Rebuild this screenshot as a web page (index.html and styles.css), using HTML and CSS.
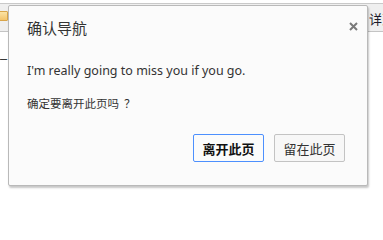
FILE: index.html
```html
<!DOCTYPE html>
<html lang="zh">
<head>
<meta charset="utf-8">
<link rel="stylesheet" href="styles.css">
</head>
<body>
<div class="page">
  <div class="toolbar">
    <div class="folder"></div>
    <div class="spacer"></div>
    <div class="tool-text">详到</div>
  </div>
  <div class="content">_ t</div>

  <div class="dialog">
    <div class="dialog-head">
      <div class="title">确认导航</div>
      <div class="close">
        <svg width="9" height="9" viewBox="0 0 9 9"><path d="M1 1 L8 8 M8 1 L1 8" stroke="#7a7a7a" stroke-width="2"/></svg>
      </div>
    </div>
    <div class="message">I'm really going to miss you if you go.</div>
    <div class="question">确定要离开此页吗<span class="fw">？</span></div>
    <div class="actions">
      <button class="btn btn-primary">离开此页</button>
      <button class="btn">留在此页</button>
    </div>
  </div>
</div>
</body>
</html>
```

FILE: styles.css
```css
html, body {
  margin: 0;
  padding: 0;
  background: #ffffff;
}
.page {
  position: relative;
  width: 383px;
  height: 201px;
  overflow: hidden;
  font-family: "Noto Sans", "Noto Sans CJK SC", sans-serif;
}
.toolbar {
  margin-top: 3px;
  height: 27px;
  border-top: 1px solid #c9c9c9;
  border-bottom: 1px solid #c4c4c4;
  background: #efefef;
  display: flex;
  align-items: flex-start;
}
.folder {
  margin-top: 7px;
  margin-left: -6px;
  width: 12px;
  height: 8px;
  border: 1px solid #d9a54a;
  border-radius: 1px;
  background: linear-gradient(#fbe3a5, #f3c46b);
}
.spacer {
  flex: 1;
}
.tool-text {
  margin-top: 7px;
  margin-right: -12px;
  font-family: "Noto Sans CJK SC", sans-serif;
  font-size: 13px;
  line-height: 15px;
  color: #1a1a2a;
  white-space: nowrap;
}
.content {
  padding: 14px 0 0 0;
  font-family: "Liberation Serif", serif;
  font-size: 14px;
  color: #000;
}
.dialog {
  position: absolute;
  left: 8px;
  top: 5px;
  width: 360px;
  box-sizing: border-box;
  padding: 12px 22px 23px 18px;
  background: #fbfbfb;
  border: 1px solid #b9b9b9;
  border-radius: 2px;
  box-shadow: 1px 2px 2px rgba(0, 0, 0, 0.22);
}
.dialog-head {
  display: flex;
  justify-content: space-between;
  align-items: flex-start;
}
.title {
  font-family: "Noto Sans CJK SC", sans-serif;
  font-size: 15px;
  line-height: 20px;
  color: #333;
}
.close {
  margin-top: 4px;
  margin-right: -13px;
  line-height: 0;
}
.message {
  margin-top: 24px;
  font-size: 12.5px;
  line-height: 18px;
  color: #333;
}
.question {
  margin-top: 15px;
  font-family: "Noto Sans CJK SC", sans-serif;
  font-size: 11.5px;
  line-height: 16px;
  color: #333;
}
.fw {
  padding-left: 5px;
}
.actions {
  margin-top: 23px;
  display: flex;
  justify-content: flex-end;
  gap: 10px;
}
.btn {
  width: 71px;
  height: 28px;
  padding: 0;
  box-sizing: border-box;
  border: 1px solid #c3c3c3;
  border-radius: 2px;
  background: #f7f7f7;
  font-family: "Noto Sans CJK SC", sans-serif;
  font-size: 13px;
  color: #333;
}
.btn-primary {
  border-color: #4d90fe;
  background: #fbfbfb;
  color: #111;
  font-weight: bold;
}
```
